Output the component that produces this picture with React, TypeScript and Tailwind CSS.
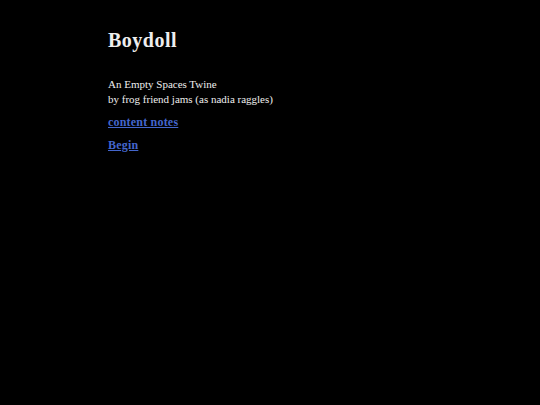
export default function App() {
  return (
    <div className="min-h-[405px] w-full bg-black text-[#eeeeee] font-['Liberation_Serif',serif]">
      <div className="pl-[108px] pt-[28px]">
        <h1 className="text-[20px] font-bold leading-[24px] tracking-[0.5px]">Boydoll</h1>
        <p className="mt-[25px] text-[11px] leading-[15px]">
          An Empty Spaces Twine
          <br />
          by frog friend jams (as nadia raggles)
        </p>
        <p className="mt-[8px] text-[12px] leading-[15px]">
          <a className="font-bold tracking-[0.2px] text-[#4466cc] underline" href="#">content notes</a>
        </p>
        <p className="mt-[8px] text-[12px] leading-[15px]">
          <a className="font-bold tracking-[0.2px] text-[#4466cc] underline" href="#">Begin</a>
        </p>
      </div>
    </div>
  )
}
